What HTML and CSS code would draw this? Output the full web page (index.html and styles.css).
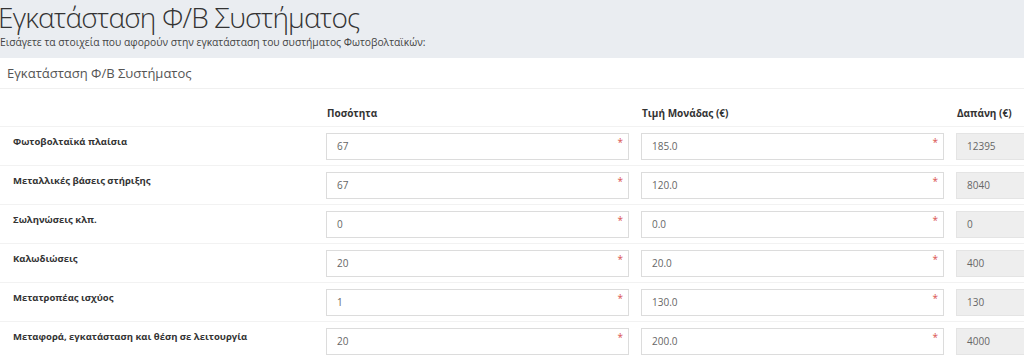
FILE: index.html
```html
<!DOCTYPE html>
<html lang="el">
<head>
    <meta charset="UTF-8">
    <title>Εγκατάσταση Φ/Β Συστήματος</title>
    <link rel="stylesheet" href="styles.css">
</head>
<body>
    <div class="page-head">
        <h1>Εγκατάσταση Φ/Β Συστήματος</h1>
        <p class="lead">Εισάγετε τα στοιχεία που αφορούν στην εγκατάσταση του συστήματος Φωτοβολταϊκών:</p>
    </div>

    <div class="card">
        <div class="card-head">Εγκατάσταση Φ/Β Συστήματος</div>

        <table class="cost-table">
            <colgroup>
                <col class="col-label">
                <col class="col-field">
                <col class="col-field">
                <col class="col-field">
            </colgroup>
            <thead>
                <tr>
                    <th></th>
                    <th>Ποσότητα</th>
                    <th>Τιμή Μονάδας (€)</th>
                    <th>Δαπάνη (€)</th>
                </tr>
            </thead>
            <tbody>
                <tr>
                    <td class="label">Φωτοβολταϊκά πλαίσια</td>
                    <td><div class="field required">67</div></td>
                    <td><div class="field required">185.0</div></td>
                    <td><div class="field readonly">12395</div></td>
                </tr>
                <tr>
                    <td class="label">Μεταλλικές βάσεις στήριξης</td>
                    <td><div class="field required">67</div></td>
                    <td><div class="field required">120.0</div></td>
                    <td><div class="field readonly">8040</div></td>
                </tr>
                <tr>
                    <td class="label">Σωληνώσεις κλπ.</td>
                    <td><div class="field required">0</div></td>
                    <td><div class="field required">0.0</div></td>
                    <td><div class="field readonly">0</div></td>
                </tr>
                <tr>
                    <td class="label">Καλωδιώσεις</td>
                    <td><div class="field required">20</div></td>
                    <td><div class="field required">20.0</div></td>
                    <td><div class="field readonly">400</div></td>
                </tr>
                <tr>
                    <td class="label">Μετατροπέας ισχύος</td>
                    <td><div class="field required">1</div></td>
                    <td><div class="field required">130.0</div></td>
                    <td><div class="field readonly">130</div></td>
                </tr>
                <tr>
                    <td class="label">Μεταφορά, εγκατάσταση και θέση σε λειτουργία</td>
                    <td><div class="field required">20</div></td>
                    <td><div class="field required">200.0</div></td>
                    <td><div class="field readonly">4000</div></td>
                </tr>
            </tbody>
        </table>
    </div>
</body>
</html>
```

FILE: styles.css
```css
/* Basic reset */
* {
    margin: 0;
    padding: 0;
    box-sizing: border-box;
}

body {
    background-color: #eaedf1;
    font-family: 'Open Sans', 'Noto Sans', sans-serif;
    color: #333;
    overflow: hidden;
}

/* Page title */
.page-head {
    padding-bottom: 8px;
}

h1 {
    font-size: 28px;
    font-weight: 300;
    line-height: 34px;
    letter-spacing: -0.8px;
    color: #333;
    margin-left: -2px;
}

.lead {
    font-size: 10.3px;
    line-height: 16px;
    color: #444;
}

/* Card */
.card {
    background-color: #fff;
    width: 1260px;
    padding-bottom: 40px;
}

.card-head {
    height: 31px;
    line-height: 31px;
    padding: 0 7px;
    font-size: 13px;
    color: #555;
    border-bottom: 1px solid #f0f0f0;
}

/* Table */
.cost-table {
    border-collapse: collapse;
    table-layout: fixed;
    width: 1259px;
}

.col-label {
    width: 314px;
}

.col-field {
    width: 315px;
}

.cost-table th {
    height: 37px;
    padding: 17px 0 0 13px;
    font-size: 10px;
    font-weight: bold;
    text-align: left;
    vertical-align: top;
    color: #333;
}

.cost-table td {
    border-top: 1px solid #f2f2f2;
    padding: 6px 0 5px 12px;
    vertical-align: top;
}

.cost-table td.label {
    padding: 8px 12px 0 13px;
    font-size: 9.5px;
    font-weight: bold;
    color: #333;
}

/* Input boxes */
.field {
    position: relative;
    height: 27px;
    width: 303px;
    line-height: 25px;
    padding: 0 10px;
    font-size: 10px;
    color: #666;
    border: 1px solid #dcdcdc;
    background-color: #fff;
}

.field.required::after {
    content: "*";
    position: absolute;
    right: 5px;
    top: 2px;
    line-height: 12px;
    font-size: 10px;
    color: #d9534f;
}

.field.readonly {
    background-color: #eee;
    border-color: #e4e4e4;
}
```
